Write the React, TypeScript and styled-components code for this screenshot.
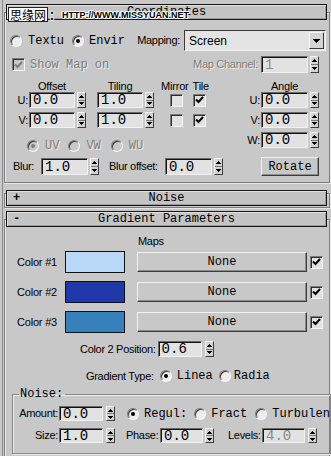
import React from "react";
import styled, { createGlobalStyle } from "styled-components";

const MONO = `"Liberation Mono", "Courier New", monospace`;
const LABEL = `"Liberation Sans", Arial, sans-serif`;

const Global = createGlobalStyle`
  html, body { margin: 0; padding: 0; background: #c8c8c8; }
  body { width: 331px; height: 456px; overflow: hidden; font-family: "Liberation Sans", Arial, sans-serif; }
`;

const Page = styled.div`
  position: relative;
  width: 331px;
  height: 456px;
  overflow: hidden;
  background: #c8c8c8;
  box-sizing: border-box;
  padding-left: 2px;
`;

const Column = styled.div`
  height: 100%;
  box-sizing: border-box;
  border-left: 1px solid #8c8c8c;
  padding-top: 4px;
`;

const Rollout = styled.section<{ $mt: number }>`
  margin: ${(p) => p.$mt}px 1px 0 1px;
`;

const TitleBar = styled.div`
  position: relative;
  z-index: 1;
  margin: 0 3px 0 2px;
  height: 16px;
  box-sizing: border-box;
  background: #c4c4c4;
  border: 1px solid #161616;
  box-shadow: inset 1px 1px 0 #e2e2e2, inset -1px -1px 0 #9c9c9c;
  display: grid;
  grid-template-columns: 20px 1fr 20px;
  align-items: center;
  font: 12px/14px ${MONO};
  color: #000;
`;

const TitleSign = styled.span`
  padding-left: 6px;
  font-weight: bold;
`;

const TitleText = styled.span`
  text-align: center;
  white-space: nowrap;
`;

const RolloutBody = styled.div<{ $collapsed?: boolean }>`
  margin-top: ${(p) => (p.$collapsed ? -13 : -8)}px;
  ${(p) => (p.$collapsed ? "height: 15px;" : "padding-bottom: 6px;")}
  box-sizing: border-box;
  border: 1px solid #7e7e7e;
  box-shadow: inset 1px 1px 0 #e8e8e8, 1px 1px 0 #e8e8e8;
`;

const Watermark = styled.div`
  position: absolute;
  left: 8px;
  top: 7px;
  z-index: 5;
  display: flex;
  align-items: center;
`;

const WmCn = styled.span`
  background: #fff;
  border: 1px solid #222;
  padding: 0 1px;
  font: 12px/13px "Noto Sans CJK SC", sans-serif;
  color: #000;
`;

const WmUrl = styled.span`
  font: bold 9px/10px "Liberation Sans", Arial, sans-serif;
  letter-spacing: 0;
  color: #000;
  text-shadow: 1px 0 0 #fff, -1px 0 0 #fff, 0 1px 0 #fff, 0 -1px 0 #fff, 1px 1px 0 #fff, -1px -1px 0 #fff;
`;

const WmColon = styled.span`
  font: bold 12px/12px "Noto Sans CJK SC", sans-serif;
  color: #000;
  margin: 0 1px 0 1px;
  text-shadow: 1px 0 0 #fff, -1px 0 0 #fff, 0 1px 0 #fff, 0 -1px 0 #fff;
`;

const Row = styled.div<{ $h: number; $mt?: number; $pl?: number; $pr?: number }>`
  display: flex;
  align-items: center;
  height: ${(p) => p.$h}px;
  margin-top: ${(p) => p.$mt ?? 0}px;
  padding-left: ${(p) => p.$pl ?? 0}px;
  padding-right: ${(p) => p.$pr ?? 0}px;
`;

const Label = styled.span<{ $w?: number; $align?: string; $ml?: number; $dim?: boolean }>`
  font: 11px/13px ${LABEL};
  letter-spacing: -0.3px;
  color: ${(p) => (p.$dim ? "#7c7c7c" : "#000")};
  ${(p) => (p.$dim ? "text-shadow: 1px 1px 0 #eeeeee;" : "")}
  ${(p) => (p.$w ? `width: ${p.$w}px; flex: none;` : "")}
  text-align: ${(p) => p.$align ?? "left"};
  margin-left: ${(p) => p.$ml ?? 0}px;
  white-space: nowrap;
`;

const MonoText = styled.span<{ $dim?: boolean; $ml?: number }>`
  font: 12px/14px ${MONO};
  color: ${(p) => (p.$dim ? "#7c7c7c" : "#000")};
  ${(p) => (p.$dim ? "text-shadow: 1px 1px 0 #eeeeee;" : "")}
  margin-left: ${(p) => p.$ml ?? 0}px;
  white-space: nowrap;
`;

const Group = styled.div<{ $ml?: number; $gap?: number; $auto?: boolean }>`
  display: flex;
  align-items: center;
  gap: ${(p) => p.$gap ?? 0}px;
  margin-left: ${(p) => (p.$auto ? "auto" : `${p.$ml ?? 0}px`)};
`;

const NumBox = styled.div<{ $w: number; $h: number; $dim?: boolean }>`
  width: ${(p) => p.$w}px;
  height: ${(p) => p.$h}px;
  box-sizing: border-box;
  background: #e2e2e2;
  border: 1px solid;
  border-color: #6a6a6a #f2f2f2 #f2f2f2 #6a6a6a;
  box-shadow: inset 1px 1px 0 #121212;
  display: flex;
  align-items: center;
  padding-left: 3px;
  overflow: hidden;
  white-space: nowrap;
  font: 14px/14px ${MONO};
  color: ${(p) => (p.$dim ? "#8a8a8a" : "#000")};
`;

const SpinBox = styled.div<{ $h: number }>`
  width: 9px;
  height: ${(p) => p.$h}px;
  box-sizing: border-box;
  background: #d2d2d2;
  border: 1px solid;
  border-color: #f4f4f4 #3c3c3c #3c3c3c #f4f4f4;
  display: flex;
  flex-direction: column;
`;

const SpinHalf = styled.div`
  flex: 1;
  display: flex;
  align-items: center;
  justify-content: center;
  & + & {
    border-top: 1px solid #7a7a7a;
  }
`;

const Tri = ({ up }: { up?: boolean }) => (
  <svg width="5" height="3" viewBox="0 0 5 3">
    <path d={up ? "M2 0h1v1h1v1h1v1H0V2h1V1h1z" : "M0 0h5v1H4v1H3v1H2V2H1V1H0z"} fill="#000" />
  </svg>
);

const Spin = ({ value, w, h = 16, dim, ml, gap = 2 }: { value: string; w: number; h?: number; dim?: boolean; ml?: number; gap?: number }) => (
  <Group $ml={ml} $gap={gap}>
    <NumBox $w={w} $h={h} $dim={dim}>{value}</NumBox>
    <SpinBox $h={h}>
      <SpinHalf><Tri up /></SpinHalf>
      <SpinHalf><Tri /></SpinHalf>
    </SpinBox>
  </Group>
);

const CheckBoxBox = styled.span<{ $ml?: number; $dim?: boolean }>`
  width: 13px;
  height: 13px;
  flex: none;
  box-sizing: border-box;
  margin-left: ${(p) => p.$ml ?? 0}px;
  background: ${(p) => (p.$dim ? "#c8c8c8" : "#e2e2e2")};
  border: 1px solid;
  border-color: #7a7a7a #f6f6f6 #f6f6f6 #7a7a7a;
  box-shadow: inset 1px 1px 0 #2e2e2e;
  display: inline-flex;
  align-items: center;
  justify-content: center;
`;

const Check = ({ on, ml, dim }: { on?: boolean; ml?: number; dim?: boolean }) => (
  <CheckBoxBox $ml={ml} $dim={dim}>
    {on && (
      <svg width="9" height="8" viewBox="0 0 9 8">
        <path d="M1 3.5 L3.5 6 L8 1" stroke={dim ? "#7c7c7c" : "#000"} strokeWidth="2" fill="none" />
      </svg>
    )}
  </CheckBoxBox>
);

const RadioCircle = styled.span<{ $on?: boolean; $dim?: boolean }>`
  width: 12px;
  height: 12px;
  flex: none;
  box-sizing: border-box;
  border-radius: 50%;
  background: ${(p) => (p.$dim ? "#cacaca" : "#ececec")};
  border: 1px solid;
  border-color: #7c7c7c #fafafa #fafafa #7c7c7c;
  box-shadow: inset 1px 1px 0 #3a3a3a;
  display: inline-flex;
  align-items: center;
  justify-content: center;
  &::after {
    content: "";
    width: 4px;
    height: 4px;
    border-radius: 50%;
    background: ${(p) => (p.$on ? (p.$dim ? "#7c7c7c" : "#000") : "transparent")};
  }
`;

const RadioOpt = styled.span<{ $ml?: number; $gap?: number }>`
  display: inline-flex;
  align-items: center;
  gap: ${(p) => p.$gap ?? 6}px;
  margin-left: ${(p) => p.$ml ?? 0}px;
`;

const Radio = ({ label, on, dim, ml, gap }: { label: string; on?: boolean; dim?: boolean; ml?: number; gap?: number }) => (
  <RadioOpt $ml={ml} $gap={gap}>
    <RadioCircle $on={on} $dim={dim} />
    <MonoText $dim={dim}>{label}</MonoText>
  </RadioOpt>
);

const SelectBox = styled.div`
  width: 142px;
  height: 21px;
  box-sizing: border-box;
  background: #e4e4e4;
  border: 1px solid;
  border-color: #3a3a3a #f2f2f2 #f2f2f2 #3a3a3a;
  display: flex;
  align-items: center;
  padding: 0 1px 0 4px;
  font: 12px/14px ${LABEL};
`;

const SelectArrow = styled.span`
  margin-left: auto;
  width: 15px;
  height: 17px;
  box-sizing: border-box;
  background: #d4d4d4;
  border: 1px solid;
  border-color: #f6f6f6 #3a3a3a #3a3a3a #f6f6f6;
  display: flex;
  align-items: center;
  justify-content: center;
`;

const PushButton = styled.div<{ $w: number; $h: number; $mt?: number }>`
  width: ${(p) => p.$w}px;
  height: ${(p) => p.$h}px;
  margin-top: ${(p) => p.$mt ?? 0}px;
  flex: none;
  box-sizing: border-box;
  background: #c8c8c8;
  border: 1px solid;
  border-color: #f2f2f2 #3c3c3c #3c3c3c #f2f2f2;
  box-shadow: inset -1px -1px 0 #8c8c8c;
  display: flex;
  align-items: center;
  justify-content: center;
  font: 12px/14px ${MONO};
  color: #000;
`;

const Main = styled.div`
  display: flex;
  margin-top: 7px;
`;

const Block = styled.div<{ $right?: boolean }>`
  display: flex;
  flex-direction: column;
  ${(p) => (p.$right ? "margin-left: auto; padding-right: 10px; align-items: flex-end;" : "")}
`;

const Head = styled.span<{ $w?: number; $ml?: number }>`
  font: 11px/12px ${LABEL};
  letter-spacing: -0.2px;
  ${(p) => (p.$w ? `width: ${p.$w}px; text-align: center;` : "")}
  margin-left: ${(p) => p.$ml ?? 0}px;
  white-space: nowrap;
`;

const ColorGrid = styled.div`
  display: grid;
  grid-template-columns: 60px 72px 173px 15px;
  grid-auto-rows: 22px;
  row-gap: 8px;
  margin-top: 4px;
  align-items: center;
`;

const ColorLabel = styled.span`
  padding-left: 12px;
  font: 11px/13px ${LABEL};
  letter-spacing: -0.2px;
  white-space: nowrap;
`;

const Swatch = styled.div<{ $c: string }>`
  width: 60px;
  height: 22px;
  box-sizing: border-box;
  background: ${(p) => p.$c};
  border: 1px solid #101010;
`;

const NoiseBox = styled.fieldset`
  margin: 4px 3px 0 7px;
  padding: 2px 0 10px 6px;
  border: 1px solid #878787;
  box-shadow: inset 1px 1px 0 #ececec, 1px 1px 0 #ececec;
`;

const Legend = styled.legend`
  padding: 0 2px 0 1px;
  font: 12px/14px ${MONO};
`;

const colors = [
  { name: "Color #1", c: "#b9d7f6" },
  { name: "Color #2", c: "#2139a8" },
  { name: "Color #3", c: "#3781bb" },
];

export default function App() {
  return (
    <>
      <Global />
      <Page>
        <Watermark>
          <WmCn>思缘网</WmCn>
          <WmColon>：</WmColon>
          <WmUrl>HTTP://WWW.MISSYUAN.NET</WmUrl>
        </Watermark>
        <Column>
          <Rollout $mt={0}>
            <TitleBar>
              <TitleSign />
              <TitleText>Coordinates</TitleText>
              <span />
            </TitleBar>
            <RolloutBody>
              <Row $h={21} $mt={17} $pl={5} $pr={3}>
                <Radio label="Textu" />
                <Radio label="Envir" on ml={8} gap={5} />
                <Group $auto $gap={4}>
                  <Label>Mapping:</Label>
                  <SelectBox>
                    Screen
                    <SelectArrow>
                      <svg width="7" height="4" viewBox="0 0 7 4">
                        <path d="M0 0h7v1H6v1H5v1H4v1H3V3H2V2H1V1H0z" fill="#000" />
                      </svg>
                    </SelectArrow>
                  </SelectBox>
                </Group>
              </Row>
              <Row $h={17} $mt={5} $pl={7} $pr={10}>
                <Check on dim />
                <MonoText $dim $ml={5}>Show Map on</MonoText>
                <Group $auto $gap={3}>
                  <Label $dim>Map Channel:</Label>
                  <Spin value="1" w={47} h={17} dim />
                </Group>
              </Row>
              <Main>
                <Block>
                  <Row $h={12} $pl={24}>
                    <Head $w={46}>Offset</Head>
                    <Head $w={46} $ml={22}>Tiling</Head>
                    <Head $ml={18}>Mirror</Head>
                    <Head $ml={4}>Tile</Head>
                  </Row>
                  {["U:", "V:"].map((l, i) => (
                    <Row key={l} $h={16} $mt={i ? 4 : 0}>
                      <Label $w={23} $align="right">{l}</Label>
                      <Spin value="0.0" w={46} ml={1} />
                      <Spin value="1.0" w={46} ml={11} />
                      <Check ml={16} />
                      <Check on ml={10} />
                    </Row>
                  ))}
                  <Row $h={14} $mt={11} $pl={22}>
                    <Radio label="UV" on dim />
                    <Radio label="VW" dim ml={9} />
                    <Radio label="WU" dim ml={10} />
                  </Row>
                  <Row $h={17} $mt={5} $pl={8}>
                    <Label $w={28}>Blur:</Label>
                    <Spin value="1.0" w={47} h={17} />
                    <Label $w={56} $ml={10}>Blur offset:</Label>
                    <Spin value="0.0" w={47} h={17} />
                  </Row>
                </Block>
                <Block $right>
                  <Row $h={12} $pr={11}>
                    <Head $w={47}>Angle</Head>
                  </Row>
                  {["U:", "V:", "W:"].map((l, i) => (
                    <Row key={l} $h={16} $mt={i ? 4 : 0}>
                      <Label $w={17} $align="right">{l}</Label>
                      <Spin value="0.0" w={47} ml={1} />
                    </Row>
                  ))}
                  <PushButton $w={58} $h={19} $mt={9}>Rotate</PushButton>
                </Block>
              </Main>
            </RolloutBody>
          </Rollout>

          <Rollout $mt={7}>
            <TitleBar>
              <TitleSign>+</TitleSign>
              <TitleText>Noise</TitleText>
              <span />
            </TitleBar>
            <RolloutBody $collapsed />
          </Rollout>

          <Rollout $mt={3}>
            <TitleBar>
              <TitleSign>-</TitleSign>
              <TitleText>Gradient Parameters</TitleText>
              <span />
            </TitleBar>
            <RolloutBody>
              <Row $h={12} $mt={15} $pl={133}>
                <Label>Maps</Label>
              </Row>
              <ColorGrid>
                {colors.map((c) => (
                  <React.Fragment key={c.name}>
                    <ColorLabel>{c.name}</ColorLabel>
                    <Swatch $c={c.c} />
                    <PushButton $w={170} $h={20}>None</PushButton>
                    <Check on />
                  </React.Fragment>
                ))}
              </ColorGrid>
              <Row $h={16} $mt={8} $pl={75}>
                <Label>Color 2 Position:</Label>
                <Spin value="0.6" w={44} ml={2} gap={3} />
              </Row>
              <Row $h={14} $mt={12} $pl={81}>
                <Label>Gradient Type:</Label>
                <Radio label="Linea" on ml={6} gap={5} />
                <Radio label="Radia" ml={6} gap={3} />
              </Row>
              <NoiseBox>
                <Legend>Noise:</Legend>
                <Row $h={15} $mt={3}>
                  <Label $w={39} $align="right">Amount:</Label>
                  <Spin value="0.0" w={44} h={15} ml={1} gap={3} />
                  <Radio label="Regul:" on ml={12} gap={5} />
                  <Radio label="Fract" ml={7} gap={5} />
                  <Radio label="Turbulen" ml={8} gap={5} />
                </Row>
                <Row $h={15} $mt={7}>
                  <Label $w={39} $align="right">Size:</Label>
                  <Spin value="1.0" w={44} h={15} ml={1} gap={3} />
                  <Label $w={32} $ml={11}>Phase:</Label>
                  <Spin value="0.0" w={43} h={15} ml={2} />
                  <Label $w={33} $ml={14}>Levels:</Label>
                  <Spin value="4.0" w={43} h={15} ml={1} gap={3} dim />
                </Row>
              </NoiseBox>
            </RolloutBody>
          </Rollout>
        </Column>
      </Page>
    </>
  );
}
